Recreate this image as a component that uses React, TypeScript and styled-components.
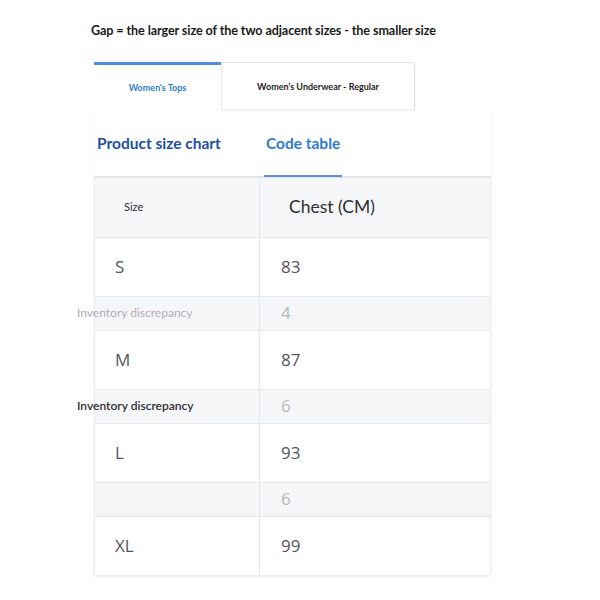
import styled, { createGlobalStyle } from 'styled-components';

const GlobalStyle = createGlobalStyle`
  html, body {
    margin: 0;
    padding: 0;
    background: #ffffff;
  }
  body {
    font-family: Lato, "Open Sans", sans-serif;
  }
`;

const Page = styled.div`
  width: 600px;
  height: 600px;
  padding: 23px 0 0 91px;
  box-sizing: border-box;
`;

const Formula = styled.div`
  font-size: 12.6px;
  font-weight: 700;
  color: #1a1a1a;
  line-height: 16px;
  letter-spacing: -0.1px;
`;

const Content = styled.div`
  width: 397px;
  margin: 23px 0 0 3px;
`;

const TabBar = styled.div`
  display: flex;
  height: 48px;
`;

const Tab = styled.div<{ $active?: boolean; $width: number }>`
  width: ${(p) => p.$width}px;
  box-sizing: border-box;
  display: flex;
  align-items: center;
  justify-content: center;
  font-size: 9px;
  font-weight: 700;
  color: ${(p) => (p.$active ? '#2f7bd0' : '#1e1e1e')};
  background: #ffffff;
  border-top: ${(p) => (p.$active ? '3px solid #4d8de2' : '1px solid #e2e2e2')};
  border-right: ${(p) => (p.$active ? 'none' : '1px solid #e2e2e2')};
  border-left: ${(p) => (p.$active ? 'none' : '1px solid #e8e8e8')};
  border-bottom: ${(p) => (p.$active ? 'none' : '1px solid #eeeeee')};
  border-top-right-radius: ${(p) => (p.$active ? 0 : 5)}px;
  box-shadow: ${(p) => (p.$active ? 'none' : '1px 1px 2px rgba(0,0,0,0.05)')};
`;

const Headings = styled.div`
  display: flex;
  align-items: flex-end;
  height: 66px;
  border-bottom: 1px solid #e4e4e4;
  box-shadow: 0 1px 2px rgba(0, 0, 0, 0.06);
`;

const Heading = styled.div<{ $underline?: boolean; $color: string }>`
  font-size: 15.5px;
  font-weight: 700;
  color: ${(p) => p.$color};
  padding: 0 2px 23px;
  margin-left: ${(p) => (p.$underline ? 41 : 1)}px;
  border-bottom: 2px solid ${(p) => (p.$underline ? '#5b8ee0' : 'transparent')};
  margin-bottom: -1px;
`;

const Table = styled.div`
  display: grid;
  grid-template-columns: 165px 1fr;
  border: 1px solid #ececec;
  border-top: none;
  border-radius: 0 0 4px 4px;
  box-shadow: 0 1px 3px rgba(0, 0, 0, 0.08);
`;

const Cell = styled.div<{ $kind: 'head' | 'row' | 'gap'; $first?: boolean }>`
  height: ${(p) => (p.$kind === 'gap' ? 34 : p.$kind === 'head' ? 60 : 59)}px;
  display: flex;
  align-items: center;
  box-sizing: border-box;
  background: ${(p) => (p.$kind === 'row' ? '#ffffff' : '#f5f6f8')};
  border-top: 1px solid #e6e7ea;
  border-right: ${(p) => (p.$first ? '1px solid #e6e7ea' : 'none')};
  padding-left: ${(p) => (p.$first ? 20 : 21)}px;
  padding-bottom: 2px;
`;

const HeadLabel = styled.span<{ $big?: boolean }>`
  font-size: ${(p) => (p.$big ? 17.5 : 11)}px;
  color: #2e2e33;
  margin-left: ${(p) => (p.$big ? 8 : 9)}px;
`;

const Value = styled.span<{ $muted?: boolean }>`
  font-family: "Open Sans", Lato, sans-serif;
  font-size: 17px;
  color: ${(p) => (p.$muted ? '#b8b8bc' : '#55555c')};
`;

const GapLabel = styled.span<{ $dark?: boolean }>`
  font-size: 12px;
  margin-left: -38px;
  white-space: nowrap;
  color: ${(p) => (p.$dark ? '#2d2d33' : '#b7a9bd')};
  font-weight: ${(p) => (p.$dark ? 600 : 400)};
`;

type Row =
  | { type: 'size'; size: string; chest: string }
  | { type: 'gap'; label: string; dark?: boolean; value: string };

const rows: Row[] = [
  { type: 'size', size: 'S', chest: '83' },
  { type: 'gap', label: 'Inventory discrepancy', value: '4' },
  { type: 'size', size: 'M', chest: '87' },
  { type: 'gap', label: 'Inventory discrepancy', dark: true, value: '6' },
  { type: 'size', size: 'L', chest: '93' },
  { type: 'gap', label: '', value: '6' },
  { type: 'size', size: 'XL', chest: '99' },
];

export default function App() {
  return (
    <Page>
      <GlobalStyle />
      <Formula>Gap = the larger size of the two adjacent sizes - the smaller size</Formula>
      <Content>
        <TabBar>
          <Tab $active $width={127}>Women's Tops</Tab>
          <Tab $width={194}>Women's Underwear - Regular</Tab>
        </TabBar>
        <Headings>
          <Heading $color="#1b4fa6">Product size chart</Heading>
          <Heading $underline $color="#2f7bd4">Code table</Heading>
        </Headings>
        <Table>
          <Cell $kind="head" $first>
            <HeadLabel>Size</HeadLabel>
          </Cell>
          <Cell $kind="head">
            <HeadLabel $big>Chest (CM)</HeadLabel>
          </Cell>
          {rows.map((r, i) =>
            r.type === 'size' ? (
              [
                <Cell key={`a${i}`} $kind="row" $first>
                  <Value>{r.size}</Value>
                </Cell>,
                <Cell key={`b${i}`} $kind="row">
                  <Value>{r.chest}</Value>
                </Cell>,
              ]
            ) : (
              [
                <Cell key={`a${i}`} $kind="gap" $first>
                  <GapLabel $dark={r.dark}>{r.label}</GapLabel>
                </Cell>,
                <Cell key={`b${i}`} $kind="gap">
                  <Value $muted>{r.value}</Value>
                </Cell>,
              ]
            )
          )}
        </Table>
      </Content>
    </Page>
  );
}
